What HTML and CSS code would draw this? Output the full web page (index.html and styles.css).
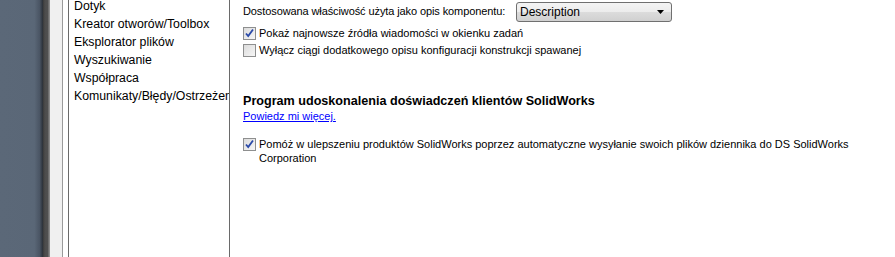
FILE: index.html
```html
<!DOCTYPE html>
<html lang="pl">
<head>
    <meta charset="UTF-8">
    <title>Opcje systemu</title>
    <link rel="stylesheet" href="styles.css">
</head>
<body>
    <div class="screen">
        <div class="desk"></div>
        <div class="frame-edge"></div>
        <div class="frame-pad"></div>
        <div class="gap"></div>

        <ul class="tree">
            <li>Dotyk</li>
            <li>Kreator otworów/Toolbox</li>
            <li>Eksplorator plików</li>
            <li>Wyszukiwanie</li>
            <li>Współpraca</li>
            <li>Komunikaty/Błędy/Ostrzeżenia</li>
        </ul>

        <div class="page">
            <div class="row">
                <label class="prop-label">Dostosowana właściwość użyta jako opis komponentu:</label>
                <div class="combo">
                    <span>Description</span>
                    <svg class="combo-arrow" width="7" height="4" viewBox="0 0 7 4"><path d="M0 0h7L3.5 4z" fill="#000"/></svg>
                </div>
            </div>

            <div class="check">
                <span class="box checked">
                    <svg width="11" height="11" viewBox="0 0 11 11"><path d="M2 5.5l2.2 2.6L9 1.5" fill="none" stroke="#2b4aa8" stroke-width="1.8"/></svg>
                </span>
                <span>Pokaż najnowsze źródła wiadomości w okienku zadań</span>
            </div>
            <div class="check">
                <span class="box"></span>
                <span>Wyłącz ciągi dodatkowego opisu konfiguracji konstrukcji spawanej</span>
            </div>

            <h3 class="section-title">Program udoskonalenia doświadczeń klientów SolidWorks</h3>
            <a class="more" href="#">Powiedz mi więcej.</a>

            <div class="check wide">
                <span class="box checked">
                    <svg width="11" height="11" viewBox="0 0 11 11"><path d="M2 5.5l2.2 2.6L9 1.5" fill="none" stroke="#2b4aa8" stroke-width="1.8"/></svg>
                </span>
                <span>Pomóż w ulepszeniu produktów SolidWorks poprzez automatyczne wysyłanie swoich plików dziennika do DS SolidWorks Corporation</span>
            </div>
        </div>
    </div>
</body>
</html>
```

FILE: styles.css
```css
body {
    margin: 0;
    padding: 0;
    background: #fff;
    font-family: 'Liberation Sans', Arial, sans-serif;
    font-size: 11px;
    color: #000;
    overflow: hidden;
}

.screen {
    display: flex;
    height: 257px;
    width: 895px;
}

.desk {
    width: 43px;
    background: linear-gradient(90deg, #5b6878 0%, #5a6777 80%, #4a5564 92%, #2a2f36 100%);
}

.frame-edge {
    width: 7px;
    background: linear-gradient(90deg, #3a3a3a 0px, #4c4c4c 2px, #505050 5px, #8a8a8a 6px);
}

.frame-pad {
    width: 12px;
    background: #f0f0f0;
    border-right: 1px solid #9a9a9a;
}

.gap {
    width: 5px;
    background: #fff;
}

.tree {
    list-style: none;
    margin: 0;
    padding: 0 0 0 5px;
    width: 155px;
    border-left: 1px solid #6a6a6a;
    border-right: 1px solid #6a6a6a;
    overflow: hidden;
    white-space: nowrap;
    font-size: 12.3px;
}

.tree li {
    height: 18px;
    line-height: 18px;
}

.tree li:first-child {
    margin-top: -3px;
}

.page {
    flex: 1;
    padding: 0 0 0 13px;
}

.row {
    display: flex;
    align-items: center;
    height: 22px;
}

.prop-label {
    width: 273px;
    letter-spacing: -0.1px;
}

.combo {
    width: 156px;
    height: 20px;
    margin-top: 1px;
    border: 1px solid #707070;
    border-radius: 3px;
    background: linear-gradient(#f4f4f4, #ececec 50%, #dcdcdc 51%, #d0d0d0);
    display: flex;
    align-items: center;
    justify-content: space-between;
    padding: 0 7px 0 3px;
    box-sizing: border-box;
    font-size: 12px;
}

.check {
    display: flex;
    align-items: flex-start;
    gap: 3px;
    margin-top: 4px;
    line-height: 14px;
}

.check + .check {
    margin-top: 3px;
}

.box {
    width: 11px;
    height: 11px;
    flex-shrink: 0;
    border: 1px solid #8e8f8f;
    background: linear-gradient(135deg, #dcdcdc, #f6f6f6);
    display: flex;
    margin-top: 1px;
}

.section-title {
    font-size: 12.6px;
    font-weight: bold;
    margin: 36px 0 0;
    line-height: 16px;
}

.more {
    display: inline-block;
    color: #0000ff;
    text-decoration: underline;
    margin-top: 1px;
}

.check.wide {
    width: 650px;
    margin-top: 15px;
}
```
